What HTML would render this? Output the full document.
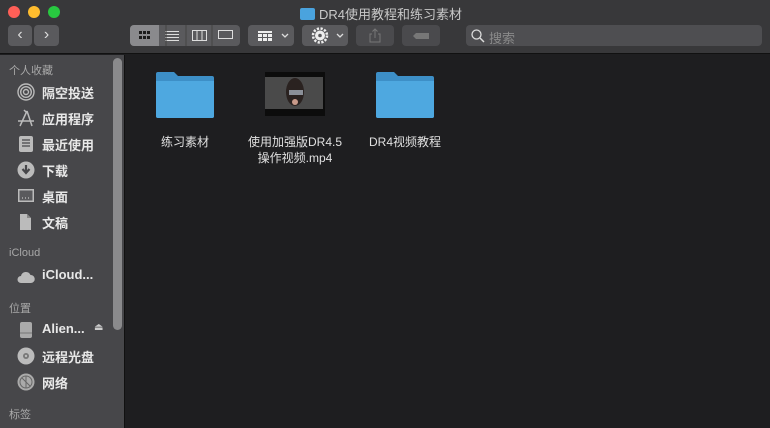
<!DOCTYPE html>
<html><head><meta charset="utf-8"><style>
*{margin:0;padding:0;box-sizing:border-box}
body{width:770px;height:428px;background:#1e1e20;font-family:"Liberation Sans","Noto Sans CJK SC",sans-serif;position:relative;overflow:hidden}
.top{position:absolute;left:0;top:0;width:770px;height:54px;background:#38383a;border-bottom:1px solid #111}
.dot{position:absolute;top:6px;width:12px;height:12px;border-radius:50%}
.title{position:absolute;top:4px;left:300px;font-size:13px;color:#c8c8c8;white-space:nowrap}
.btn{position:absolute;top:25px;height:21px;background:#5a5a5d;border-radius:4px}
.side{position:absolute;left:0;top:55px;width:125px;height:373px;background:#47474a;border-right:1px solid #111}
.sh{position:absolute;left:9px;font-size:11px;color:#a8a8a8}
.si{position:absolute;left:42px;font-size:13px;color:#e8e8e8;font-weight:bold}
.ic{position:absolute;left:17px;width:18px;height:18px}
.lbl{position:absolute;font-size:12px;color:#e0e0e0;text-align:center;line-height:16px}
.folder{position:absolute;width:60px;height:48px}
</style></head><body>
<div class="top">
 <div class="dot" style="left:8px;background:#fe5f57"></div>
 <div class="dot" style="left:28px;background:#febc2e"></div>
 <div class="dot" style="left:48px;background:#28c840"></div>
 <div class="title"><span style="display:inline-block;width:15px;height:12px;background:#4aa3de;border-radius:2px;vertical-align:-1px;margin-right:4px"></span>DR4使用教程和练习素材</div>
 <div class="btn" style="left:8px;width:24px;color:#ddd;font-size:16px;text-align:center;line-height:20px">&#8249;</div>
 <div class="btn" style="left:34px;width:25px;color:#ddd;font-size:16px;text-align:center;line-height:20px">&#8250;</div>
 <div class="btn" style="left:130px;width:110px;background:#5a5a5d"></div>
 <div class="btn" style="left:130px;width:29px;background:#8a8a8d;border-radius:4px 0 0 4px"></div>
 <svg style="position:absolute;left:130px;top:25px" width="110" height="21">
  <g fill="#1c1c1c"><rect x="9" y="6" width="3" height="3"/><rect x="13" y="6" width="3" height="3"/><rect x="17" y="6" width="3" height="3"/><rect x="9" y="11" width="3" height="3"/><rect x="13" y="11" width="3" height="3"/><rect x="17" y="11" width="3" height="3"/></g>
  <g stroke="#ddd" fill="none"><path d="M35 6.5h14M35 9.5h14M35 12.5h14M35 15.5h14"/><rect x="62.5" y="5.5" width="14" height="10"/><path d="M67 6v10M72 6v10"/><rect x="88.5" y="5.5" width="14" height="8"/></g>
  <path d="M36 0v21M56 0v21M82 0v21" stroke="#444"/>
 </svg>
 <div class="btn" style="left:248px;width:46px"></div>
 <svg style="position:absolute;left:248px;top:25px" width="46" height="21"><g fill="#eee"><rect x="10" y="6" width="14" height="2"/><rect x="10" y="9" width="4" height="3"/><rect x="15" y="9" width="4" height="3"/><rect x="20" y="9" width="4" height="3"/><rect x="10" y="13" width="4" height="3"/><rect x="15" y="13" width="4" height="3"/><rect x="20" y="13" width="4" height="3"/></g><path d="M34 9l3 3 3-3" stroke="#ddd" fill="none" stroke-width="1.3"/></svg>
 <div class="btn" style="left:302px;width:46px"></div>
 <svg style="position:absolute;left:302px;top:25px" width="46" height="21"><circle cx="18" cy="10.5" r="5" fill="#eee"/><circle cx="18" cy="10.5" r="7" fill="none" stroke="#eee" stroke-width="2.5" stroke-dasharray="2.2 1.5"/><circle cx="18" cy="10.5" r="1.8" fill="#5a5a5d"/><path d="M35 9l3 3 3-3" stroke="#ddd" fill="none" stroke-width="1.3"/></svg>
 <div class="btn" style="left:356px;width:38px;background:#4a4a4d"></div>
 <svg style="position:absolute;left:356px;top:25px" width="38" height="21"><path d="M16 9h-2v8h10v-8h-2M19 13V4M16.5 6.5L19 4l2.5 2.5" stroke="#777" fill="none"/></svg>
 <div class="btn" style="left:402px;width:38px;background:#4a4a4d"></div>
 <svg style="position:absolute;left:402px;top:25px" width="38" height="21"><path d="M14 8h13v6H14l-3-3z" fill="#777"/></svg>
 <div class="btn" style="left:466px;width:296px;background:#4e4e51"></div>
 <svg style="position:absolute;left:470px;top:28px" width="16" height="16"><circle cx="6.5" cy="6.5" r="4.5" stroke="#ddd" fill="none" stroke-width="1.3"/><path d="M10 10l4 4" stroke="#ddd" stroke-width="1.5"/></svg>
 <div style="position:absolute;left:489px;top:28px;font-size:13px;color:#8a8a8a">搜索</div>
</div>
<div class="side">
 <div style="position:absolute;left:113px;top:3px;width:9px;height:272px;background:#8a8a8c;border-radius:5px"></div>
 <div class="sh" style="top:7px">个人收藏</div>
 <svg class="ic" style="top:28px" viewBox="0 0 18 18"><g fill="none" stroke="#bbb" stroke-width="1.4"><circle cx="9" cy="9" r="8"/><circle cx="9" cy="9" r="5.3"/><circle cx="9" cy="9" r="2.5"/></g></svg>
 <div class="si" style="top:28px">隔空投送</div>
 <svg class="ic" style="top:54px" viewBox="0 0 18 18"><path d="M3 17L10 2M10 2l5 15M1 12h16M9 3L7 1" stroke="#bbb" stroke-width="1.5" fill="none"/></svg>
 <div class="si" style="top:54px">应用程序</div>
 <svg class="ic" style="top:80px" viewBox="0 0 18 18"><rect x="2" y="1" width="14" height="16" rx="2" fill="#bbb"/><path d="M5 5h8M5 8h8M5 11h8" stroke="#47474a" stroke-width="1.2"/></svg>
 <div class="si" style="top:80px">最近使用</div>
 <svg class="ic" style="top:106px" viewBox="0 0 18 18"><circle cx="9" cy="9" r="8.5" fill="#bbb"/><path d="M9 4v7M5.5 8l3.5 4 3.5-4" stroke="#47474a" stroke-width="2.2" fill="none"/></svg>
 <div class="si" style="top:106px">下载</div>
 <svg class="ic" style="top:132px" viewBox="0 0 18 18"><rect x="1" y="2" width="16" height="13" fill="#bbb"/><rect x="2.5" y="3.5" width="13" height="10" fill="#5a5a5d"/><path d="M5 11h1M8 11h1M11 11h1" stroke="#ddd"/></svg>
 <div class="si" style="top:132px">桌面</div>
 <svg class="ic" style="top:158px" viewBox="0 0 18 18"><path d="M3 1h7l4 4v12H3z" fill="#bbb"/><path d="M10 1v4h4" fill="#888"/></svg>
 <div class="si" style="top:158px">文稿</div>
 <div class="sh" style="top:192px">iCloud</div>
 <svg class="ic" style="top:213px" viewBox="0 0 18 18"><path d="M4 15a3.5 3.5 0 0 1 0-7 5 5 0 0 1 9.5-1 4 4 0 0 1 0.5 8z" fill="#bbb"/></svg>
 <div class="si" style="top:212px">iCloud...</div>
 <div class="sh" style="top:245px">位置</div>
 <svg class="ic" style="top:266px" viewBox="0 0 18 18"><rect x="3" y="1" width="12" height="16" rx="2" fill="#aaa"/><path d="M3 12h12" stroke="#777"/></svg>
 <div class="si" style="top:266px">Alien...</div>
 <div style="position:absolute;left:94px;top:267px;color:#ccc;font-size:10px">&#9167;</div>
 <svg class="ic" style="top:292px" viewBox="0 0 18 18"><circle cx="9" cy="9" r="8.5" fill="#bbb"/><circle cx="9" cy="9" r="3" fill="#777"/><circle cx="9" cy="9" r="1.2" fill="#bbb"/></svg>
 <div class="si" style="top:292px">远程光盘</div>
 <svg class="ic" style="top:318px" viewBox="0 0 18 18"><circle cx="9" cy="9" r="8.5" fill="#aaa"/><circle cx="9" cy="9" r="6" fill="none" stroke="#666"/><path d="M5 5l8 8M9 3v12" stroke="#666"/></svg>
 <div class="si" style="top:318px">网络</div>
 <div class="sh" style="top:351px">标签</div>
</div>
<svg class="folder" style="left:155px;top:70px" viewBox="0 0 60 48"><path d="M1 4a2 2 0 0 1 2-2h16l4 4h34a2 2 0 0 1 2 2v38a2 2 0 0 1-2 2H3a2 2 0 0 1-2-2z" fill="#3d8fc7"/><path d="M1 11h58v35a2 2 0 0 1-2 2H3a2 2 0 0 1-2-2z" fill="#4ea8e0"/></svg>
<svg class="folder" style="left:375px;top:70px" viewBox="0 0 60 48"><path d="M1 4a2 2 0 0 1 2-2h16l4 4h34a2 2 0 0 1 2 2v38a2 2 0 0 1-2 2H3a2 2 0 0 1-2-2z" fill="#3d8fc7"/><path d="M1 11h58v35a2 2 0 0 1-2 2H3a2 2 0 0 1-2-2z" fill="#4ea8e0"/></svg>
<svg style="position:absolute;left:265px;top:72px" width="60" height="44"><rect width="60" height="44" fill="#0c0c0c"/><rect x="0" y="5" width="58" height="32" fill="#4a4a4a"/><ellipse cx="30" cy="20" rx="9" ry="14" fill="#2a2220"/><rect x="24" y="18" width="14" height="5" fill="#8a8f98"/><circle cx="30" cy="30" r="3" fill="#c99a8a"/></svg>
<div class="lbl" style="left:145px;top:134px;width:80px">练习素材</div>
<div class="lbl" style="left:240px;top:134px;width:110px">使用加强版DR4.5<br>操作视频.mp4</div>
<div class="lbl" style="left:355px;top:134px;width:100px">DR4视频教程</div>
</body></html>
